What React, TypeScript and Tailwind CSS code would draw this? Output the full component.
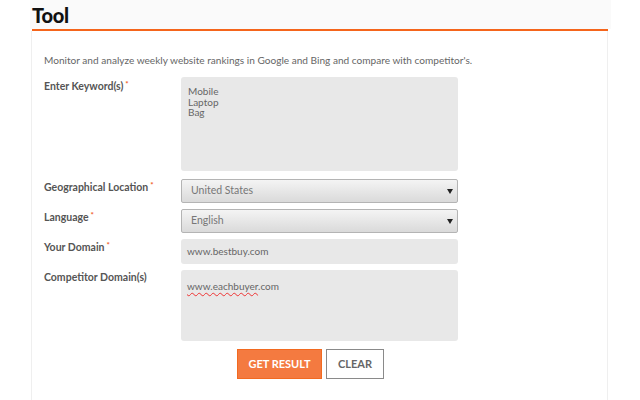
import React from "react";

const Star = () => <sup className="text-[#ef5a28] text-[8px] ml-[2px] relative top-[-3px]">*</sup>;

const Arrow = () => (
  <svg width="6" height="5" viewBox="0 0 6 5" className="mr-[1px]">
    <path d="M0 0 H6 L3 5 Z" fill="#222" />
  </svg>
);

export default function App() {
  return (
    <div className="w-[640px] h-[400px] bg-white overflow-hidden" style={{ fontFamily: "Lato, 'Open Sans', sans-serif" }}>
      <div className="ml-[30px] w-[581px] h-full flex flex-col">
        <div className="h-[29px] bg-[#fafafa] flex items-end pl-[2px]">
          <span className="text-[20px] font-black text-[#111] leading-[28px] tracking-[-0.3px]">Tool</span>
        </div>
        <div className="h-[2px] bg-[#f5651b] ml-[2px] mr-[3px]"></div>
        <div className="flex-1 ml-[1px] mr-[3px] border-x border-[#efefef] bg-white pl-[12px]">
          <p className="mt-[22px] text-[10.1px] text-[#666] leading-[14px]">
            Monitor and analyze weekly website rankings in Google and Bing and compare with competitor's.
          </p>
          <div className="flex mt-[10px]">
            <div className="w-[137px] pt-[2px] text-[10.5px] font-bold text-[#555]">Enter Keyword(s)<Star /></div>
            <div className="w-[277px] h-[94px] bg-[#e8e8e8] rounded-[3px] pl-[7px] pt-[9px] text-[10px] text-[#666] leading-[10.5px]">
              <div>Mobile</div>
              <div>Laptop</div>
              <div>Bag</div>
            </div>
          </div>
          <div className="flex mt-[8px]">
            <div className="w-[137px] pt-[1px] text-[10.5px] font-bold text-[#555]">Geographical Location<Star /></div>
            <div className="w-[277px] h-[24px] border border-[#b4b4b4] rounded-[2px] bg-gradient-to-b from-[#f4f4f4] to-[#dadada] flex items-center justify-between pl-[9px] pr-[3px] text-[10.5px] text-[#777]">
              <span>United States</span>
              <Arrow />
            </div>
          </div>
          <div className="flex mt-[6px]">
            <div className="w-[137px] pt-[1px] text-[10.5px] font-bold text-[#555]">Language<Star /></div>
            <div className="w-[277px] h-[24px] border border-[#b4b4b4] rounded-[2px] bg-gradient-to-b from-[#f4f4f4] to-[#dadada] flex items-center justify-between pl-[9px] pr-[3px] text-[10.5px] text-[#777]">
              <span>English</span>
              <Arrow />
            </div>
          </div>
          <div className="flex mt-[6px]">
            <div className="w-[137px] pt-[1px] text-[10.5px] font-bold text-[#555]">Your Domain<Star /></div>
            <div className="w-[277px] h-[25px] bg-[#e8e8e8] rounded-[3px] flex items-center pl-[6px] text-[10px] text-[#666]">
              www.bestbuy.com
            </div>
          </div>
          <div className="flex mt-[6px]">
            <div className="w-[137px] pt-[0px] text-[10.5px] font-bold text-[#555]">Competitor Domain(s)</div>
            <div className="w-[277px] h-[71px] bg-[#e8e8e8] rounded-[3px] pl-[6px] pt-[10px] text-[10px] text-[#666] leading-[12px]">
              <span className="underline decoration-wavy decoration-[#e33] decoration-[1px] underline-offset-[2px]">www.eachbuyer</span>.com
            </div>
          </div>
          <div className="flex mt-[8px] ml-[193px] gap-[4px]">
            <div className="w-[85px] h-[30px] bg-[#f47a40] border border-[#f26a20] flex items-center justify-center text-white text-[11px] font-bold">
              GET RESULT
            </div>
            <div className="w-[58px] h-[30px] bg-white border border-[#8a8a8a] flex items-center justify-center text-[#666] text-[11px] font-bold">
              CLEAR
            </div>
          </div>
        </div>
      </div>
    </div>
  );
}
